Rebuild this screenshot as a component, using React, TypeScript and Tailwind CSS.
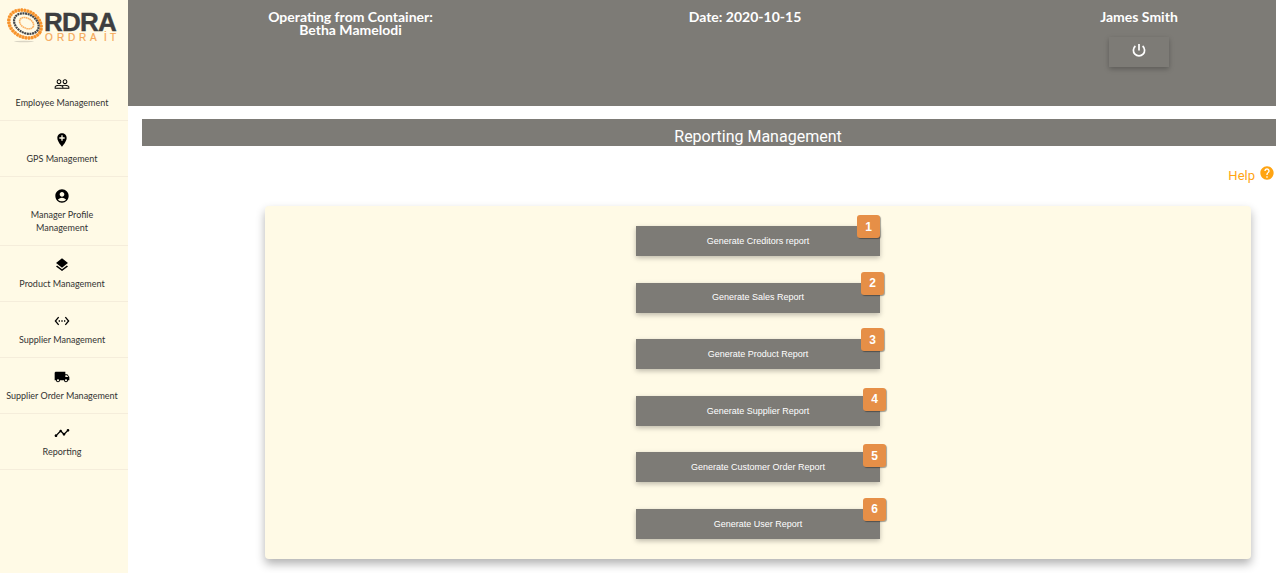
import type { IconType } from "react-icons";
import {
  MdAccountCircle,
  MdAddLocation,
  MdHelp,
  MdLayers,
  MdLocalShipping,
  MdPeopleOutline,
  MdSettingsEthernet,
  MdTimeline,
} from "react-icons/md";

const navItems: { label: string; Icon: IconType }[] = [
  { label: "Employee Management", Icon: MdPeopleOutline },
  { label: "GPS Management", Icon: MdAddLocation },
  { label: "Manager Profile Management", Icon: MdAccountCircle },
  { label: "Product Management", Icon: MdLayers },
  { label: "Supplier Management", Icon: MdSettingsEthernet },
  { label: "Supplier Order Management", Icon: MdLocalShipping },
  { label: "Reporting", Icon: MdTimeline },
];

const reports = [
  { label: "Generate Creditors report", badge: "-top-[11px] right-0" },
  { label: "Generate Sales Report", badge: "-top-[11px] -right-1" },
  { label: "Generate Product Report", badge: "-top-[11px] -right-1" },
  { label: "Generate Supplier Report", badge: "-top-2 -right-1.5" },
  { label: "Generate Customer Order Report", badge: "-top-2 -right-1.5" },
  { label: "Generate User Report", badge: "-top-[11px] -right-1.5" },
];

function Logo() {
  return (
    <svg viewBox="0 0 128 48" className="block h-12 w-full" role="img" aria-label="ORDRA IT">
      <ellipse cx="24" cy="41.5" rx="10" ry="0.8" fill="#d9d4c4" />
      <g fill="none" transform="rotate(28 25 24)">
        <ellipse cx="25" cy="24" rx="17" ry="13" stroke="#fbb76c" strokeWidth="2.6" />
        <ellipse cx="25" cy="24" rx="17" ry="13" stroke="#f7922a" strokeWidth="3.4" strokeDasharray="2 1" />
        <ellipse cx="26" cy="23" rx="13" ry="9.4" stroke="#44464a" strokeWidth="2.2" strokeDasharray="2 0.6" />
        <ellipse cx="26" cy="22.5" rx="7.5" ry="5" stroke="#fbb062" strokeWidth="1.6" strokeDasharray="1.6 0.4" />
      </g>
      <text
        y="31"
        fill="#3d3e40"
        stroke="#3d3e40"
        strokeWidth="0.4"
        fontSize="26"
        fontWeight="700"
        fontFamily="Liberation Sans, Arial, sans-serif"
      >
        <tspan x="44">R</tspan>
        <tspan x="62">D</tspan>
        <tspan x="80">R</tspan>
        <tspan x="98">A</tspan>
      </text>
      <text
        y="41"
        fill="#f6a858"
        stroke="#f6a858"
        strokeWidth="0.2"
        fontSize="10"
        fontFamily="Liberation Sans, Arial, sans-serif"
      >
        <tspan x="45">O</tspan>
        <tspan x="57">R</tspan>
        <tspan x="68">D</tspan>
        <tspan x="79">R</tspan>
        <tspan x="90">A</tspan>
        <tspan x="104">İ</tspan>
        <tspan x="110">T</tspan>
      </text>
    </svg>
  );
}

function PowerIcon() {
  return (
    <svg viewBox="0 0 16 16" className="size-4" fill="none" stroke="currentColor" strokeWidth="1.7" aria-hidden="true">
      <path d="M8 2v6.4M4.4 4a5.6 5.6 0 1 0 7.2 0" />
    </svg>
  );
}

function Sidebar() {
  return (
    <aside className="w-32 shrink-0 bg-[#fffae6]">
      <a href="#home" className="block">
        <Logo />
      </a>
      <nav className="pt-[17px]">
        {navItems.map(({ label, Icon }) => (
          <a
            key={label}
            href="#"
            className="flex flex-col items-center gap-1 border-b border-[#f5eddb] py-[11px] pr-1 text-center text-[9px] leading-[13px] text-[#333]"
          >
            <Icon className="size-4 text-black" />
            <span className="max-w-28">{label}</span>
          </a>
        ))}
      </nav>
    </aside>
  );
}

function Header() {
  return (
    <header className="grid min-h-[106px] grid-cols-[395fr_394fr_334fr] bg-[#7d7b76] pt-[10px] pl-[25px] text-center text-[14px] leading-[13px] font-bold text-white">
      <p>
        Operating from Container:
        <br />
        Betha Mamelodi
      </p>
      <p>Date: 2020-10-15</p>
      <div className="flex flex-col items-center gap-[14px] pl-[60px]">
        <p>James Smith</p>
        <button
          type="button"
          aria-label="Log out"
          className="flex h-[30px] w-[60px] items-center justify-center pb-1 shadow-[0_2px_5px_rgba(0,0,0,0.26)]"
        >
          <PowerIcon />
        </button>
      </div>
    </header>
  );
}

export default function App() {
  return (
    <div className="flex min-h-screen bg-white font-[Lato,sans-serif]">
      <Sidebar />
      <div className="min-w-0 flex-1">
        <Header />
        <main className="pt-[13px] pl-[14px]">
          <h1 className="bg-[#7d7b76] pt-[9px] pl-[98px] text-center font-[Roboto,sans-serif] text-[16px] leading-[18px] text-white">
            Reporting Management
          </h1>
          <div className="flex justify-end pt-5 pr-px">
            <a
              href="#help"
              className="flex items-start gap-1 font-[Roboto,sans-serif] text-[13px] leading-[20px] text-[#ffa412]"
            >
              Help
              <MdHelp className="-mt-px size-4" />
            </a>
          </div>
          <section className="mt-5 mr-[25px] ml-[123px] flex min-h-[353px] flex-col items-center justify-between rounded bg-[#fffae6] py-5 shadow-[0_5px_10px_rgba(0,0,0,0.3)]">
            {reports.map(({ label, badge }, index) => (
              <div key={label} className="relative">
                <button
                  type="button"
                  className="block h-[30px] w-[244px] bg-[#7d7b76] pt-px font-['Liberation_Sans',Arial,sans-serif] text-[9px] text-white shadow-[0_2px_5px_rgba(0,0,0,0.26)]"
                >
                  {label}
                </button>
                <span
                  className={`absolute flex size-[23px] items-center justify-center rounded-[3px] bg-[#e68f47] font-['Liberation_Sans',Arial,sans-serif] text-[12px] font-bold text-white shadow-[1px_1px_1px_rgba(0,0,0,0.35)] ${badge}`}
                >
                  {index + 1}
                </span>
              </div>
            ))}
          </section>
        </main>
      </div>
    </div>
  );
}
